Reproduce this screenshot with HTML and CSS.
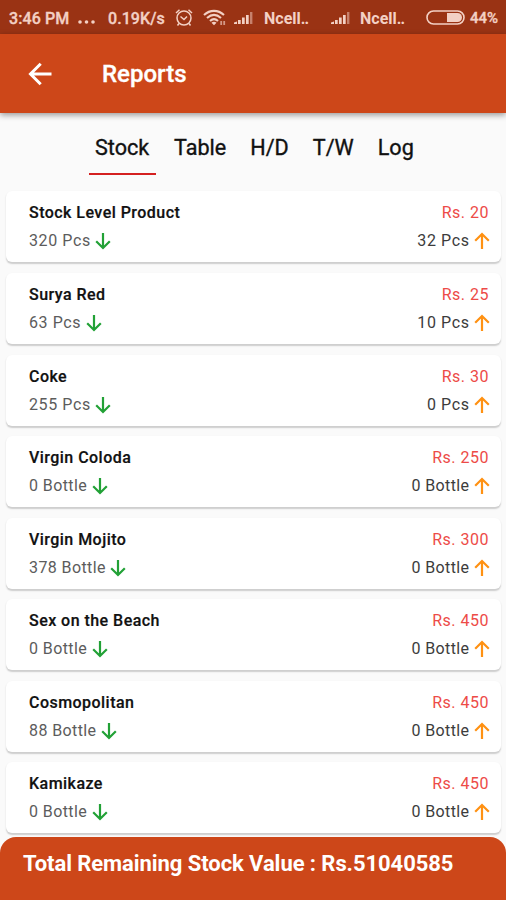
FILE: index.html
```
<!DOCTYPE html>
<html lang="en">
<head>
<meta charset="utf-8">
<title>Reports</title>
<link rel="stylesheet" href="styles.css">
</head>
<body>
<svg class="defs" width="0" height="0" aria-hidden="true">
  <symbol id="down" viewBox="0 0 16 18"><path d="M8 1v15M1.200 9.200 8 16l6.800-6.800" fill="none" stroke="currentColor" stroke-width="2.200"/></symbol>
  <symbol id="up" viewBox="0 0 16 18"><path d="M8 17V2M1.200 8.800 8 2l6.800 6.800" fill="none" stroke="currentColor" stroke-width="2.200"/></symbol>
  <symbol id="signal" viewBox="0 0 22 14"><path d="M0 13v-1.500l3-1V13zM4 13V9h2.700v4zM8 13V6.500h2.700V13zM12 13V4h2.700v9z" fill="currentColor"/><path d="M16 13V1h2.400v12z" fill="currentColor" opacity=".5"/></symbol>
</svg>
<div class="screen">
  <div class="status">
    <span class="time">3:46 PM</span>
    <svg width="18" height="18" viewBox="0 0 18 18" fill="currentColor"><circle cx="2" cy="13" r="1.800"/><circle cx="8.500" cy="13" r="1.800"/><circle cx="15" cy="13" r="1.800"/></svg>
    <span class="speed">0.19K/s</span>
    <svg width="18" height="18" viewBox="0 0 18 18" fill="none" stroke="currentColor" stroke-width="1.500"><circle cx="9" cy="9" r="7"/><path d="M5.500 7.500 9 10.500l3-3M1 4 4.500 .8M17 4 13.500 .8M4 14.500l-1.500 2M14 14.500l1.500 2"/></svg>
    <svg width="24" height="18" viewBox="0 0 24 18" fill="none" stroke="currentColor" stroke-width="2.100"><path d="M1 6c6-5.500 14-5.500 20 0M4 9c4.500-4 9.500-4 14 0M7 12c2.500-2.300 5.500-2.300 8 0"/><path d="m8.500 13.800 2.500 2.500 2.500-2.500c-1.500-1.300-3.500-1.300-5 0z" fill="currentColor" stroke="none"/><path d="M18.200 12v4M21.200 12v4" stroke-width="1.800" opacity=".65"/></svg>
    <svg width="22" height="14"><use href="#signal"/></svg>
    <span class="carrier">Ncell<i>..</i></span>
    <svg width="22" height="14"><use href="#signal"/></svg>
    <span class="carrier">Ncell<i>..</i></span>
    <svg width="39" height="16" viewBox="0 0 39 16"><rect x="1" y="1" width="37" height="13" rx="6.500" fill="none" stroke="currentColor" stroke-width="1.600"/><path d="M21 3h10.500a4.500 4.500 0 0 1 0 9H21z" fill="currentColor"/></svg>
    <span class="percent">44%</span>
  </div>
  <header class="appbar">
    <svg width="24" height="24" viewBox="0 0 24 24" fill="none" stroke="currentColor" stroke-width="3"><path d="M23.500 12H3M12.700 1.800 2.500 12l10.200 10.200"/></svg>
    <h1>Reports</h1>
  </header>
  <nav class="tabs">
    <a class="active">Stock</a><a>Table</a><a>H/D</a><a>T/W</a><a>Log</a>
  </nav>
  <main class="list">
    <article class="card"><div class="row"><b>Stock Level Product</b><span class="price">Rs. 20</span></div><div class="row"><span class="in pcs">320 Pcs<svg><use href="#down"/></svg></span><span class="out pcs">32 Pcs<svg><use href="#up"/></svg></span></div></article>
    <article class="card"><div class="row"><b>Surya Red</b><span class="price">Rs. 25</span></div><div class="row"><span class="in pcs">63 Pcs<svg><use href="#down"/></svg></span><span class="out pcs">10 Pcs<svg><use href="#up"/></svg></span></div></article>
    <article class="card"><div class="row"><b>Coke</b><span class="price">Rs. 30</span></div><div class="row"><span class="in pcs">255 Pcs<svg><use href="#down"/></svg></span><span class="out pcs">0 Pcs<svg><use href="#up"/></svg></span></div></article>
    <article class="card"><div class="row"><b>Virgin Coloda</b><span class="price">Rs. 250</span></div><div class="row"><span class="in">0 Bottle<svg><use href="#down"/></svg></span><span class="out">0 Bottle<svg><use href="#up"/></svg></span></div></article>
    <article class="card"><div class="row"><b>Virgin Mojito</b><span class="price">Rs. 300</span></div><div class="row"><span class="in">378 Bottle<svg><use href="#down"/></svg></span><span class="out">0 Bottle<svg><use href="#up"/></svg></span></div></article>
    <article class="card"><div class="row"><b>Sex on the Beach</b><span class="price">Rs. 450</span></div><div class="row"><span class="in">0 Bottle<svg><use href="#down"/></svg></span><span class="out">0 Bottle<svg><use href="#up"/></svg></span></div></article>
    <article class="card"><div class="row"><b>Cosmopolitan</b><span class="price">Rs. 450</span></div><div class="row"><span class="in">88 Bottle<svg><use href="#down"/></svg></span><span class="out">0 Bottle<svg><use href="#up"/></svg></span></div></article>
    <article class="card"><div class="row"><b>Kamikaze</b><span class="price">Rs. 450</span></div><div class="row"><span class="in">0 Bottle<svg><use href="#down"/></svg></span><span class="out">0 Bottle<svg><use href="#up"/></svg></span></div></article>
  </main>
  <footer class="total">Total Remaining Stock Value : Rs.51040585</footer>
</div>
</body>
</html>
```
FILE: styles.css
```
* { box-sizing: border-box; }
body { margin: 0; font-family: Roboto, sans-serif; }
.defs { display: none; }
.screen { width: 506px; height: 900px; display: flex; flex-direction: column; overflow: hidden; background: #fafafa; }
.status {
  flex: none; height: 34px; padding: 2px 0 0 9px; background: #9a3314; color: #f3d0c4;
  display: grid; align-items: center; justify-items: start;
  grid-template-columns: 69px 30px 67px 28px 31px 30px 67px 29px 66px 44px 1fr;
  font-size: 16px; font-weight: 500; white-space: nowrap;
}
.status svg { display: block; }
.time, .speed, .percent { -webkit-text-stroke: .35px currentColor; }
.time, .speed { letter-spacing: .08px; }
.carrier { font-weight: 700; font-size: 16px; }
.carrier i { font-style: normal; letter-spacing: -.8px; }
.percent { font-size: 15px; }
.appbar {
  flex: none; height: 79px; padding-left: 28px; background: #cd4719; color: #fff;
  display: flex; align-items: center; gap: 50px; box-shadow: 0 2px 6px rgba(0,0,0,.4); z-index: 1;
}
.appbar h1 { margin: 0; font-size: 24px; font-weight: 500; line-height: 30px; -webkit-text-stroke: .35px #fff; }
.tabs { flex: none; height: 78px; padding: 13px 0 0 89px; display: flex; align-items: flex-start; gap: 12px; }
.tabs a { height: 49px; padding: 0 6px; line-height: 43px; font-size: 21.600px; font-weight: 400; color: #111; -webkit-text-stroke: .35px #111; }
.tabs .active { width: 67px; border-bottom: 2px solid #d42020; }
.list { flex: none; height: 646px; padding: .4px 5px 0 6px; display: flex; flex-direction: column; gap: 10.570px; }
.card {
  flex: none; height: 71px; padding: 11px 12px 0 23px; border-radius: 6px; background: #fff;
  box-shadow: 0 1.500px 1.500px rgba(0,0,0,.18); font-size: 16px; letter-spacing: .4px; color: #5c5c5c;
}
.row { display: flex; justify-content: space-between; line-height: 22px; }
.row + .row { margin-top: 6px; }
.row b { font-weight: 500; color: #111; letter-spacing: .46px; -webkit-text-stroke: .2px #111; }
.price { color: #ed4b47; font-weight: 400; letter-spacing: .5px; }
.in, .out { display: flex; align-items: center; gap: 4.500px; font-weight: 400; }
.pcs { letter-spacing: .6px; }
.out { color: #3c3c3c; margin-right: -1px; }
.row svg { width: 16px; height: 18px; color: #22a136; }
.out svg { color: #ff9112; }
.total {
  flex: none; height: 63px; padding: 12px 23px 0; background: #cd4719; color: #fff; z-index: 1;
  border-radius: 16px 16px 0 0; font-size: 22px; font-weight: 700; line-height: 30px; letter-spacing: -.07px;
}
```
